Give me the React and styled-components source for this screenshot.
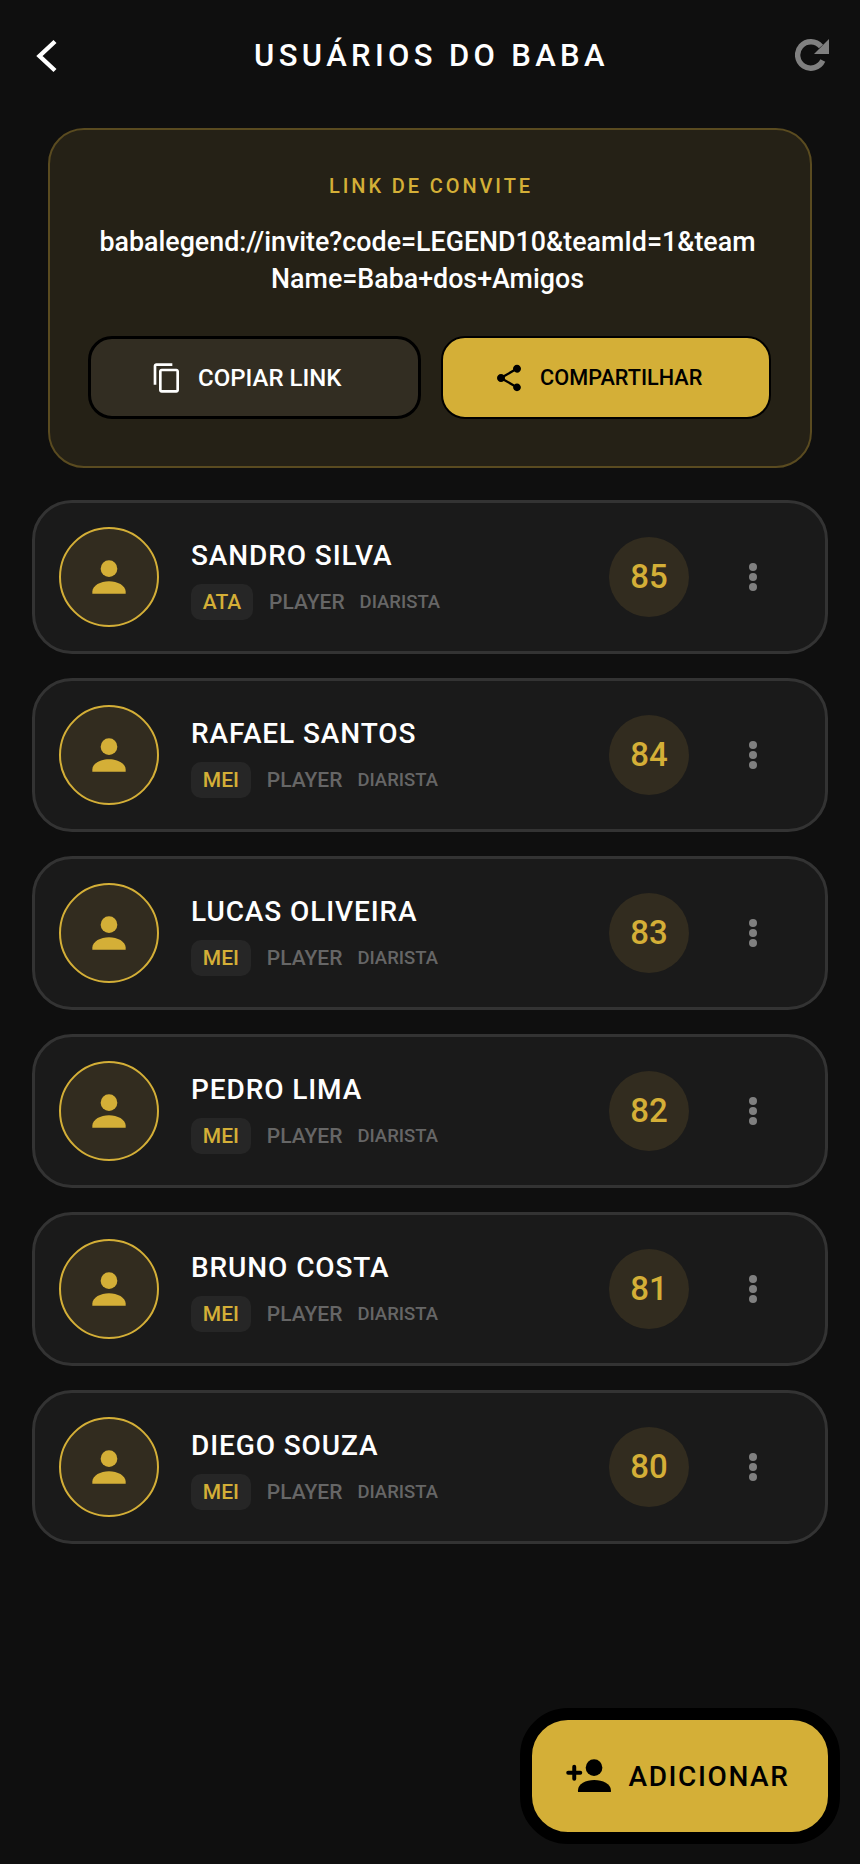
import React from "react";
import styled, { createGlobalStyle } from "styled-components";

const GOLD = "#d4af37";

const players = [
  { name: "SANDRO SILVA", pos: "ATA", score: 85 },
  { name: "RAFAEL SANTOS", pos: "MEI", score: 84 },
  { name: "LUCAS OLIVEIRA", pos: "MEI", score: 83 },
  { name: "PEDRO LIMA", pos: "MEI", score: 82 },
  { name: "BRUNO COSTA", pos: "MEI", score: 81 },
  { name: "DIEGO SOUZA", pos: "MEI", score: 80 },
];

function Player({ name, pos, score }) {
  return (
    <Row>
      <Avatar>
        <svg width="50" height="50" viewBox="0 0 24 24" fill={GOLD}>
          <circle cx="12" cy="8" r="4" />
          <path d="M4 20v-1c0-3 4-5 8-5s8 2 8 5v1z" />
        </svg>
      </Avatar>
      <Info>
        <Name>{name}</Name>
        <Tags>
          <PosBadge>{pos}</PosBadge>
          <Role>PLAYER</Role>
          <Kind>DIARISTA</Kind>
        </Tags>
      </Info>
      <Score>{score}</Score>
      <Dots>
        <Dot />
        <Dot />
        <Dot />
      </Dots>
    </Row>
  );
}

export default function App() {
  return (
    <Page>
      <GlobalStyle />
      <Header>
        <IconSlot>
          <svg width="24" height="36" viewBox="0 0 24 36" fill="none" stroke="#fff" strokeWidth="4.4">
            <path d="M21 3.5 5.5 18 21 32.500" />
          </svg>
        </IconSlot>
        <Title>USUÁRIOS DO BABA</Title>
        <IconSlot>
          <svg width="34" height="34" viewBox="0 0 34 34" fill="none">
            <path d="M27.800 21.500A13.200 13.200 0 1 1 26 7.500" stroke="#808080" strokeWidth="5.400" />
            <path d="M34 0v15H19z" fill="#808080" />
          </svg>
        </IconSlot>
      </Header>

      <InviteCard>
        <InviteLabel>LINK DE CONVITE</InviteLabel>
        <InviteLink>babalegend://invite?code=LEGEND10&amp;teamId=1&amp;teamName=Baba+dos+Amigos</InviteLink>
        <Buttons>
          <CopyButton>
            <svg width="32" height="32" viewBox="0 0 24 24" fill="#fff">
              <path d="M16 1H4c-1.100 0-2 .9-2 2v14h2V3h12V1zm3 4H8c-1.100 0-2 .9-2 2v14c0 1.100.9 2 2 2h11c1.100 0 2-.9 2-2V7c0-1.100-.9-2-2-2zm0 16H8V7h11v14z" />
            </svg>
            COPIAR LINK
          </CopyButton>
          <ShareButton>
            <svg width="32" height="32" viewBox="0 0 24 24" fill="#000">
              <path d="M18 16.080c-.76 0-1.440.3-1.960.77L8.910 12.700c.05-.23.09-.46.09-.7s-.04-.47-.09-.7l7.050-4.110c.54.5 1.250.81 2.040.81 1.660 0 3-1.340 3-3s-1.340-3-3-3-3 1.340-3 3c0 .24.04.47.09.7L8.040 9.810C7.500 9.310 6.790 9 6 9c-1.660 0-3 1.340-3 3s1.340 3 3 3c.79 0 1.500-.31 2.040-.81l7.120 4.160c-.05.21-.08.43-.08.65 0 1.610 1.310 2.920 2.920 2.920s2.920-1.310 2.920-2.920-1.310-2.920-2.920-2.920z" />
            </svg>
            COMPARTILHAR
          </ShareButton>
        </Buttons>
      </InviteCard>

      <List>
        {players.map((p) => (
          <Player key={p.name} {...p} />
        ))}
      </List>

      <AddButton>
        <svg width="50" height="50" viewBox="0 0 24 24" fill="#000">
          <circle cx="14.900" cy="8" r="4" />
          <path d="M7.200 19.700v-.9c0-3 3.700-4.900 7.800-4.900s8 1.900 8 4.900v.9z" />
          <path d="M2.500 10.400h5.800M5.400 7.500v5.800" stroke="#000" strokeWidth="1.900" strokeLinecap="round" />
        </svg>
        ADICIONAR
      </AddButton>
    </Page>
  );
}

const GlobalStyle = createGlobalStyle`
  html, body {
    margin: 0;
    padding: 0;
    background: #0f0f0f;
  }
  * {
    box-sizing: border-box;
  }
`;

const Page = styled.div`
  position: relative;
  width: 860px;
  height: 1864px;
  background: #0f0f0f;
  font-family: Roboto, "Liberation Sans", sans-serif;
  overflow: hidden;
`;

const Header = styled.div`
  height: 112px;
  padding: 0 31px 0 34px;
  display: flex;
  align-items: center;
  justify-content: space-between;
`;

const IconSlot = styled.div`
  width: 34px;
  height: 36px;
  display: flex;
  align-items: center;
`;

const Title = styled.h1`
  margin: 0 0 2px;
  color: #fff;
  font-size: 31px;
  font-weight: 500;
  letter-spacing: 4.350px;
`;

const InviteCard = styled.div`
  margin: 16px 48px 0;
  height: 340px;
  padding: 45px 39px 0 38px;
  background: #252116;
  border: 2px solid #5a4b20;
  border-radius: 36px;
  text-align: center;
`;

const InviteLabel = styled.div`
  margin-left: 3px;
  color: ${GOLD};
  font-size: 20px;
  font-weight: 500;
  letter-spacing: 2.900px;
  line-height: 22px;
`;

const InviteLink = styled.div`
  margin: 27px 8px 0 4px;
  color: #fff;
  font-size: 26.800px;
  font-weight: 500;
  line-height: 37px;
  word-break: break-all;
`;

const Buttons = styled.div`
  margin-top: 38px;
  display: flex;
  gap: 20px;
`;

const BaseButton = styled.button`
  flex: 1;
  height: 83px;
  display: flex;
  align-items: center;
  justify-content: center;
  gap: 15px;
  border-radius: 24px;
  font-family: inherit;
  font-weight: 500;
  padding: 0 16px 0 0;
`;

const CopyButton = styled(BaseButton)`
  background: #322d22;
  border: 3px solid #000;
  color: #fff;
  font-size: 24px;
`;

const ShareButton = styled(BaseButton)`
  background: ${GOLD};
  border: 2px solid #000;
  color: #000;
  font-size: 21.700px;
`;

const List = styled.div`
  margin: 32px 32px 0;
  display: flex;
  flex-direction: column;
  gap: 24.500px;
`;

const Row = styled.div`
  height: 153.500px;
  padding: 0 24px 0 24px;
  display: flex;
  align-items: center;
  background: #1a1a1a;
  border: 3px solid #333;
  border-radius: 40px;
`;

const Avatar = styled.div`
  width: 100px;
  height: 100px;
  flex: none;
  display: flex;
  align-items: center;
  justify-content: center;
  background: #322c1f;
  border: 2px solid ${GOLD};
  border-radius: 50%;
`;

const Info = styled.div`
  margin-left: 32px;
  padding-top: 6px;
  flex: 1;
`;

const Name = styled.div`
  color: #fff;
  font-size: 28px;
  font-weight: 500;
  letter-spacing: 0.900px;
  line-height: 34px;
`;

const Tags = styled.div`
  margin-top: 11px;
  display: flex;
  align-items: center;
`;

const PosBadge = styled.span`
  height: 36px;
  padding: 0 11.800px;
  display: flex;
  align-items: center;
  background: #262626;
  border-radius: 10px;
  color: ${GOLD};
  font-size: 21px;
  font-weight: 500;
`;

const Role = styled.span`
  margin-left: 16px;
  color: #666;
  font-size: 21px;
  font-weight: 500;
`;

const Kind = styled.span`
  margin-left: 15px;
  color: #666;
  font-size: 18.500px;
  font-weight: 500;
`;

const Score = styled.div`
  width: 80px;
  height: 80px;
  flex: none;
  display: flex;
  align-items: center;
  justify-content: center;
  background: #322c1f;
  border-radius: 50%;
  color: ${GOLD};
  font-size: 33px;
  font-weight: 500;
`;

const Dots = styled.div`
  margin: 0 44px 0 60px;
  display: flex;
  flex-direction: column;
  gap: 2px;
`;

const Dot = styled.span`
  width: 8px;
  height: 8px;
  background: #808080;
  border-radius: 50%;
`;

const AddButton = styled.button`
  position: absolute;
  left: 520px;
  top: 1708px;
  width: 320px;
  height: 136px;
  display: flex;
  align-items: center;
  justify-content: center;
  gap: 16px;
  background: ${GOLD};
  border: 12px solid #000;
  border-radius: 48px;
  color: #000;
  font-family: inherit;
  font-size: 28px;
  font-weight: 500;
  letter-spacing: 1.600px;
  padding: 0 8px 0 0;
`;
